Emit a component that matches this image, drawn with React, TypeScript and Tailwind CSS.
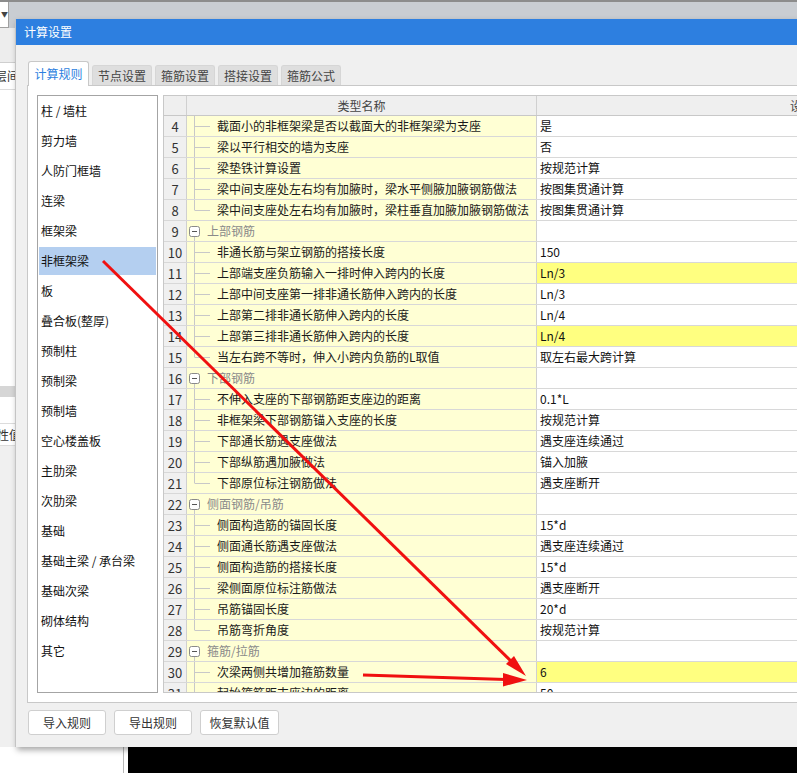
import React from "react";

type Row = {
	n: number;
	name: string;
	value?: string;
	group?: boolean;
	hl?: boolean;
	last?: boolean;
};

const categories = [
	"柱 / 墙柱",
	"剪力墙",
	"人防门框墙",
	"连梁",
	"框架梁",
	"非框架梁",
	"板",
	"叠合板(整厚)",
	"预制柱",
	"预制梁",
	"预制墙",
	"空心楼盖板",
	"主肋梁",
	"次肋梁",
	"基础",
	"基础主梁 / 承台梁",
	"基础次梁",
	"砌体结构",
	"其它",
];

const tabs = ["计算规则", "节点设置", "箍筋设置", "搭接设置", "箍筋公式"];

const rows: Row[] = [
	{ n: 4, name: "截面小的非框架梁是否以截面大的非框架梁为支座", value: "是" },
	{ n: 5, name: "梁以平行相交的墙为支座", value: "否" },
	{ n: 6, name: "梁垫铁计算设置", value: "按规范计算" },
	{ n: 7, name: "梁中间支座处左右均有加腋时，梁水平侧腋加腋钢筋做法", value: "按图集贯通计算" },
	{ n: 8, name: "梁中间支座处左右均有加腋时，梁柱垂直加腋加腋钢筋做法", value: "按图集贯通计算", last: true },
	{ n: 9, name: "上部钢筋", group: true },
	{ n: 10, name: "非通长筋与架立钢筋的搭接长度", value: "150" },
	{ n: 11, name: "上部端支座负筋输入一排时伸入跨内的长度", value: "Ln/3", hl: true },
	{ n: 12, name: "上部中间支座第一排非通长筋伸入跨内的长度", value: "Ln/3" },
	{ n: 13, name: "上部第二排非通长筋伸入跨内的长度", value: "Ln/4" },
	{ n: 14, name: "上部第三排非通长筋伸入跨内的长度", value: "Ln/4", hl: true },
	{ n: 15, name: "当左右跨不等时，伸入小跨内负筋的L取值", value: "取左右最大跨计算", last: true },
	{ n: 16, name: "下部钢筋", group: true },
	{ n: 17, name: "不伸入支座的下部钢筋距支座边的距离", value: "0.1*L" },
	{ n: 18, name: "非框架梁下部钢筋锚入支座的长度", value: "按规范计算" },
	{ n: 19, name: "下部通长筋遇支座做法", value: "遇支座连续通过" },
	{ n: 20, name: "下部纵筋遇加腋做法", value: "锚入加腋" },
	{ n: 21, name: "下部原位标注钢筋做法", value: "遇支座断开", last: true },
	{ n: 22, name: "侧面钢筋/吊筋", group: true },
	{ n: 23, name: "侧面构造筋的锚固长度", value: "15*d" },
	{ n: 24, name: "侧面通长筋遇支座做法", value: "遇支座连续通过" },
	{ n: 25, name: "侧面构造筋的搭接长度", value: "15*d" },
	{ n: 26, name: "梁侧面原位标注筋做法", value: "遇支座断开" },
	{ n: 27, name: "吊筋锚固长度", value: "20*d" },
	{ n: 28, name: "吊筋弯折角度", value: "按规范计算", last: true },
	{ n: 29, name: "箍筋/拉筋", group: true },
	{ n: 30, name: "次梁两侧共增加箍筋数量", value: "6", hl: true },
	{ n: 31, name: "起始箍筋距支座边的距离", value: "50" },
];

function TreeMark({ group, last }: { group?: boolean; last?: boolean }) {
	if (group) {
		return (
			<svg width="20" height="20" className="shrink-0">
				<line x1="7.5" y1="15" x2="7.5" y2="20" stroke="#c8c8c8" />
				<rect x="2.5" y="5.5" width="10" height="10" rx="2" fill="#fff" stroke="#8a8a8a" />
				<line x1="5" y1="10.5" x2="10" y2="10.5" stroke="#555" />
			</svg>
		);
	}
	return (
		<svg width="30" height="20" className="shrink-0">
			<line x1="7.5" y1="0" x2="7.5" y2={last ? 10 : 20} stroke="#c8c8c8" />
			<line x1="7.5" y1="10.5" x2="23" y2="10.5" stroke="#c8c8c8" />
		</svg>
	);
}

export default function App() {
	return (
		<div className="relative w-[797px] h-[773px] overflow-hidden bg-white font-['Noto_Sans_CJK_SC',sans-serif] text-[12px] text-[#222]">
			{/* background window */}
			<div className="flex h-full w-full">
				<div className="flex w-[15px] shrink-0 flex-col overflow-hidden bg-white">
					<div className="h-[2px] shrink-0 bg-[#8c8c8c]" />
					<div className="flex h-[26px] shrink-0 bg-[#c9cdd2]">
						<div className="flex w-[9px] items-center border-r border-b border-[#a0a0a0] bg-white pl-[1px] text-[7px] leading-none text-[#444]">
							▼
						</div>
					</div>
					<div className="h-[35px] shrink-0 border-b border-[#cfcfcf] bg-[#ededed]" />
					<div className="flex h-[27px] shrink-0 items-center overflow-hidden border-b border-[#dcdcdc] whitespace-nowrap">
						<span className="-ml-[5px] leading-none text-[#333]">层间</span>
					</div>
					<div className="h-[296px] shrink-0" />
					<div className="h-[11px] shrink-0 bg-[#d6d6d6]" />
					<div className="h-[27px] shrink-0 border-b border-[#dcdcdc]" />
					<div className="flex h-[22px] shrink-0 items-center overflow-hidden border-b border-[#dcdcdc] whitespace-nowrap">
						<span className="-ml-[3px] leading-none text-[#333]">性值</span>
					</div>
					<div className="flex-1 bg-[#f0f0f0]" />
					<div className="h-[26px] shrink-0 bg-white" />
				</div>
				<div className="flex flex-1 flex-col">
					<div className="h-[19px] shrink-0 border-t-2 border-[#8c8c8c] bg-[#c9cdd2]" />
					<div className="flex-1 bg-[#f0f0f0]" />
					<div className="flex h-[26px] shrink-0">
						<div className="w-[109px] border-r border-[#b8b8b8] bg-white" />
						<div className="w-[4px] bg-white" />
						<div className="flex-1 bg-black" />
					</div>
				</div>
			</div>

			{/* dialog */}
			<div className="absolute left-[15px] top-[19px] flex h-[728px] w-[1110px] flex-col border-l border-[#c4c4c4] bg-[#f0f0f0] shadow-[2px_3px_6px_rgba(0,0,0,0.35)]">
				<div className="flex h-[26px] shrink-0 items-center bg-[#2d7fe0] pl-[8px] text-[12px] text-white">
					计算设置
				</div>
				<div className="flex flex-1 flex-col px-[11px] pt-[16px]">
					<div className="ml-[1px] flex h-[24px] items-end gap-[3px]">
						{tabs.map((t, i) =>
							i === 0 ? (
								<div
									key={t}
									className="relative z-10 -mb-px flex h-[25px] w-[61px] items-center justify-center rounded-t-[3px] border border-b-0 border-[#c8c8c8] bg-white text-[#2d7fe0]">
									{t}
								</div>
							) : (
								<div
									key={t}
									className="flex h-[20px] w-[60px] items-center justify-center rounded-t-[3px] border border-b-0 border-[#d6d6d6] bg-[#dedede] text-[#444]">
									{t}
								</div>
							)
						)}
					</div>
					<div className="flex h-[618px] shrink-0 gap-[5px] border border-[#c8c8c8] bg-white p-[9px]">
						<div className="flex w-[121px] shrink-0 flex-col border border-[#a4a4a4]">
							{categories.map((c, i) => (
								<div
									key={c}
									className={
										i === 5
											? "mx-[1px] my-[1px] flex h-[28px] shrink-0 items-center bg-[#b4cff0] pl-[2px] leading-none text-[#111]"
											: "mx-[1px] my-[1px] flex h-[28px] shrink-0 items-center pl-[2px] leading-none text-[#111]"
									}>
									{c}
								</div>
							))}
						</div>
						<div className="flex w-[918px] shrink-0 flex-col overflow-hidden border border-[#c8c8c8]">
							<div className="flex h-[20px] shrink-0 border-b border-[#c8c8c8] bg-[#efefef] leading-none text-[#444]">
								<div className="w-[23px] shrink-0 border-r border-[#d0d0d0]" />
								<div className="flex w-[350px] shrink-0 items-center justify-center border-r border-[#d0d0d0]">
									类型名称
								</div>
								<div className="flex w-[542px] shrink-0 items-center justify-center">设置值</div>
							</div>
							{rows.map((r) => (
								<div key={r.n} className="flex h-[21px] shrink-0 border-b border-[#d8d8d8] leading-none">
									<div className="flex w-[23px] shrink-0 items-center justify-center border-r border-[#d0d0d0] bg-[#f0f0f0] text-[13px] text-[#333]">
										{r.n}
									</div>
									<div className="flex w-[350px] shrink-0 items-center border-r border-[#d0d0d0] bg-[#ffffd4] whitespace-nowrap">
										<TreeMark group={r.group} last={r.last} />
										<span className={r.group ? "text-[#8a8a8a]" : "text-[#1a1a1a]"}>{r.name}</span>
									</div>
									<div
										className={
											r.hl
												? "flex w-[542px] shrink-0 items-center bg-[#ffff80] pl-[3px] text-[#111]"
												: "flex w-[542px] shrink-0 items-center bg-white pl-[3px] text-[#111]"
										}>
										{r.value}
									</div>
								</div>
							))}
						</div>
					</div>
					<div className="ml-[1px] mt-[7px] flex gap-[8px]">
						<button className="h-[25px] w-[78px] rounded-[3px] border border-[#cfcfcf] bg-white text-[12px] text-[#333]">
							导入规则
						</button>
						<button className="h-[25px] w-[78px] rounded-[3px] border border-[#cfcfcf] bg-white text-[12px] text-[#333]">
							导出规则
						</button>
						<button className="h-[25px] w-[79px] rounded-[3px] border border-[#cfcfcf] bg-white text-[12px] text-[#333]">
							恢复默认值
						</button>
					</div>
				</div>
			</div>

			{/* red annotation arrows */}
			<svg className="pointer-events-none absolute inset-0" width="797" height="773">
				<line x1="103" y1="261" x2="513" y2="663" stroke="#f01010" strokeWidth="3" />
				<polygon points="526,676 506,664 514,656" fill="#f01010" />
				<line x1="363" y1="675" x2="506" y2="679.5" stroke="#f01010" strokeWidth="3" />
				<polygon points="527,680 503,673 503,686.5" fill="#f01010" />
			</svg>
		</div>
	);
}
